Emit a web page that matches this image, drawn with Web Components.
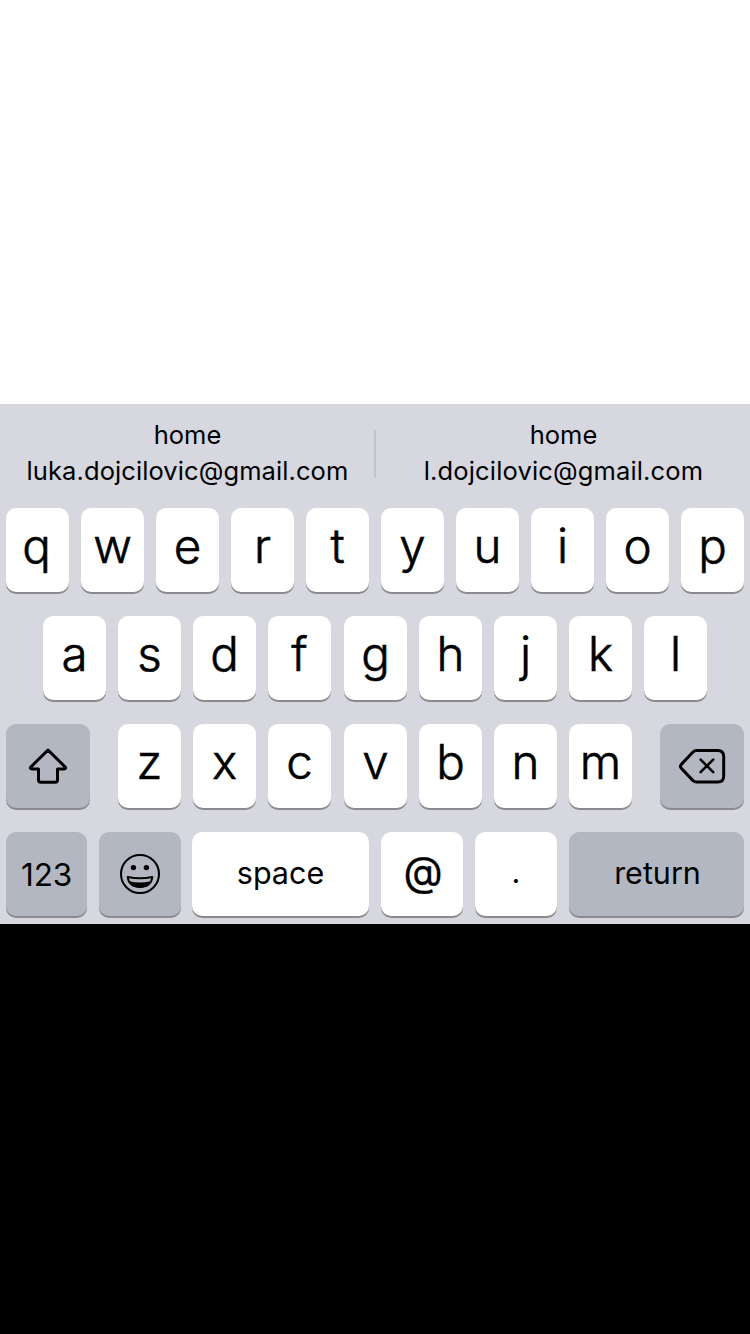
<!DOCTYPE html>
<html lang="en"><head><meta charset="utf-8"><title>Keyboard</title>
<style>
html,body{margin:0;height:100%;background:#000}
body{font-family:Inter,"Liberation Sans",sans-serif;color:#000;overflow:hidden}
</style></head><body>
<phone-screen>
 <soft-keyboard></soft-keyboard>
</phone-screen>
<script>
class PhoneScreen extends HTMLElement{
  constructor(){super();this.attachShadow({mode:'open'}).innerHTML=`
  <style>:host{display:flex;flex-direction:column;width:750px;height:1334px;background:#000}
  .view{height:404px;background:#fff;flex:none}</style>
  <div class="view"></div><slot></slot>`}
}
class SuggestionItem extends HTMLElement{
  constructor(){super();this.attachShadow({mode:'open'}).innerHTML=`
  <style>:host{display:flex;flex:none;flex-direction:column;align-items:center;width:375px;font-size:25.5px;line-height:36px;white-space:nowrap}
  .s{letter-spacing:var(--ls,0)}</style>
  <div><slot name="label"></slot></div><div class="s"><slot></slot></div>`}
}
class KeyCap extends HTMLElement{
  constructor(){super();this.attachShadow({mode:'open'}).innerHTML=`
  <style>:host{display:flex;align-items:center;justify-content:center;flex:none;box-sizing:border-box;
    width:63px;height:84px;border-radius:10px;background:#fff;box-shadow:0 2px 0 #8a8a8f;
    font-size:47.5px;line-height:58px;font-weight:300;-webkit-text-stroke:.6px #000;padding-bottom:8px}
  :host([dark]){background:#b3b7c1}
  :host([word]){font-size:30.5px;font-weight:400;-webkit-text-stroke:0;padding-bottom:2px}
  :host([icon]){padding:0}
  span{display:flex;transform:translate(var(--dx,0px),var(--dy,0px));letter-spacing:var(--ls,0)}
  </style><span><slot></slot></span>`}
}
class SoftKeyboard extends HTMLElement{
  constructor(){super();
  const keys=s=>[...s].map(c=>`<key-cap>${c}</key-cap>`).join('');
  this.attachShadow({mode:'open'}).innerHTML=`
  <style>:host{display:flex;flex-direction:column;height:520px;background:#d6d7df;flex:none}
  .bar{display:flex;height:104px;box-sizing:border-box;padding-top:13px;flex:none;overflow:hidden}
  .sep{width:2px;height:48px;margin:13px -1px 0;background:#c2c3cb;flex:none}
  .row{display:flex;gap:12px;height:84px;margin-bottom:24px;padding:0 6px;flex:none}
  .row:last-child{margin-bottom:0}
  .r2{padding-left:43px}.r3{gap:28px}
  .grp{display:flex;gap:12px}
  .gap{margin-left:1px}
  svg{display:block}</style>
  <div class="bar">
   <suggestion-item style="--ls:.09px"><span slot="label">home</span>luka.dojcilovic@gmail.com</suggestion-item>
   <div class="sep"></div>
   <suggestion-item style="--ls:.15px;width:377px"><span slot="label">home</span>l.dojcilovic@gmail.com</suggestion-item>
  </div>
  <div class="row"><key-cap style="--dx:-1px">q</key-cap>${keys('wertyuiop')}</div>
  <div class="row r2">${keys('asdf')}<key-cap class="gap">g</key-cap>${keys('hjkl')}</div>
  <div class="row r3">
   <key-cap dark icon style="width:84px"><svg width="42" height="38" viewBox="0 0 42 38" fill="none" stroke="#000" stroke-width="3" stroke-linejoin="round"><path d="M21 3 L38.4 20.2 Q39.2 21.8 37 22 H30.5 V33 Q30.5 35.2 28.3 35.2 H13.7 Q11.5 35.2 11.5 33 V22 H5 Q2.8 21.8 3.6 20.2 Z"/></svg></key-cap>
   <div class="grp">${keys('zxc')}<key-cap class="gap">v</key-cap>${keys('bnm')}</div>
   <key-cap dark icon style="width:84px"><svg width="50" height="38" viewBox="0 0 50 38" fill="none" stroke="#000" stroke-width="3" stroke-linejoin="round" stroke-linecap="round"><path d="M19.5 3.5 H40.7 Q46.7 3.5 46.7 9.5 V29 Q46.7 35 40.7 35 H19.5 Q17.5 35 16 33.6 L4.3 21.2 Q2.6 19.3 4.3 17.4 L16 5 Q17.5 3.5 19.5 3.5 Z"/><path stroke-width="2.6" d="M23.6 12.6 L36.2 25.2 M36.2 12.6 L23.6 25.2"/></svg></key-cap>
  </div>
  <div class="row">
   <key-cap dark word style="width:81px;font-size:31.5px;--dy:2px;--ls:-.2px">123</key-cap>
   <key-cap dark icon style="width:82px"><svg width="42" height="42" viewBox="0 0 42 42"><circle cx="21" cy="21" r="19" fill="none" stroke="#000" stroke-width="2"/><circle cx="14.4" cy="14.6" r="2.7"/><circle cx="27.4" cy="14.6" r="2.7"/><path d="M8.7 24 Q21 26.6 33.3 24 C32.8 30.5 28 34 21 34 S9.2 30.5 8.7 24 Z" fill="none" stroke="#000" stroke-width="2" stroke-linejoin="round"/><path d="M9.8 28 Q21 31 32.2 28 Q28.5 34.6 21 34.6 T9.8 28Z"/></svg></key-cap>
   <key-cap word style="width:177px;margin-left:-1px">space</key-cap>
   <key-cap word style="width:82px;font-size:40.5px;--dy:-1px;--dx:1px;-webkit-text-stroke:.3px #000">@</key-cap>
   <key-cap word style="width:82px;--dy:-1px">.</key-cap>
   <key-cap dark word style="width:175px;--dx:1px">return</key-cap>
  </div>`}
}
customElements.define('suggestion-item',SuggestionItem);
customElements.define('key-cap',KeyCap);
customElements.define('soft-keyboard',SoftKeyboard);
customElements.define('phone-screen',PhoneScreen);
</script></body></html>
